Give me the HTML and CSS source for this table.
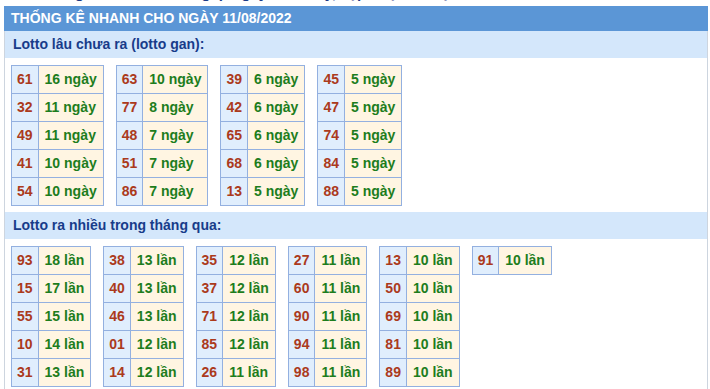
FILE: index.html
```html
<!DOCTYPE html>
<html lang="vi">

<head>
    <meta charset="utf-8">
    <title>Thống kê nhanh</title>
    <link rel="stylesheet" href="styles.css">
</head>

<body>
    <!-- page heading (mostly scrolled above) -->
    <div class="page-title">
        <p>Thống kê nhanh xổ số gấp ngày hôm nay, cập nhật liên tục</p>
    </div>

    <div class="stat-box">
        <div class="stat-box__title">THỐNG KÊ NHANH CHO NGÀY 11/08/2022</div>

        <!-- lotto gan -->
        <div class="stat-box__section">Lotto lâu chưa ra (lotto gan):</div>
        <div class="stat-box__tables">
            <table class="lotto">
                <tr><td class="num">61</td><td class="count">16 ngày</td></tr>
                <tr><td class="num">32</td><td class="count">11 ngày</td></tr>
                <tr><td class="num">49</td><td class="count">11 ngày</td></tr>
                <tr><td class="num">41</td><td class="count">10 ngày</td></tr>
                <tr><td class="num">54</td><td class="count">10 ngày</td></tr>
            </table>
            <table class="lotto">
                <tr><td class="num">63</td><td class="count">10 ngày</td></tr>
                <tr><td class="num">77</td><td class="count">8 ngày</td></tr>
                <tr><td class="num">48</td><td class="count">7 ngày</td></tr>
                <tr><td class="num">51</td><td class="count">7 ngày</td></tr>
                <tr><td class="num">86</td><td class="count">7 ngày</td></tr>
            </table>
            <table class="lotto">
                <tr><td class="num">39</td><td class="count">6 ngày</td></tr>
                <tr><td class="num">42</td><td class="count">6 ngày</td></tr>
                <tr><td class="num">65</td><td class="count">6 ngày</td></tr>
                <tr><td class="num">68</td><td class="count">6 ngày</td></tr>
                <tr><td class="num">13</td><td class="count">5 ngày</td></tr>
            </table>
            <table class="lotto">
                <tr><td class="num">45</td><td class="count">5 ngày</td></tr>
                <tr><td class="num">47</td><td class="count">5 ngày</td></tr>
                <tr><td class="num">74</td><td class="count">5 ngày</td></tr>
                <tr><td class="num">84</td><td class="count">5 ngày</td></tr>
                <tr><td class="num">88</td><td class="count">5 ngày</td></tr>
            </table>
        </div>

        <!-- lotto ra nhieu -->
        <div class="stat-box__section">Lotto ra nhiều trong tháng qua:</div>
        <div class="stat-box__tables">
            <table class="lotto">
                <tr><td class="num">93</td><td class="count">18 lần</td></tr>
                <tr><td class="num">15</td><td class="count">17 lần</td></tr>
                <tr><td class="num">55</td><td class="count">15 lần</td></tr>
                <tr><td class="num">10</td><td class="count">14 lần</td></tr>
                <tr><td class="num">31</td><td class="count">13 lần</td></tr>
            </table>
            <table class="lotto">
                <tr><td class="num">38</td><td class="count">13 lần</td></tr>
                <tr><td class="num">40</td><td class="count">13 lần</td></tr>
                <tr><td class="num">46</td><td class="count">13 lần</td></tr>
                <tr><td class="num">01</td><td class="count">12 lần</td></tr>
                <tr><td class="num">14</td><td class="count">12 lần</td></tr>
            </table>
            <table class="lotto">
                <tr><td class="num">35</td><td class="count">12 lần</td></tr>
                <tr><td class="num">37</td><td class="count">12 lần</td></tr>
                <tr><td class="num">71</td><td class="count">12 lần</td></tr>
                <tr><td class="num">85</td><td class="count">12 lần</td></tr>
                <tr><td class="num">26</td><td class="count">11 lần</td></tr>
            </table>
            <table class="lotto">
                <tr><td class="num">27</td><td class="count">11 lần</td></tr>
                <tr><td class="num">60</td><td class="count">11 lần</td></tr>
                <tr><td class="num">90</td><td class="count">11 lần</td></tr>
                <tr><td class="num">94</td><td class="count">11 lần</td></tr>
                <tr><td class="num">98</td><td class="count">11 lần</td></tr>
            </table>
            <table class="lotto">
                <tr><td class="num">13</td><td class="count">10 lần</td></tr>
                <tr><td class="num">50</td><td class="count">10 lần</td></tr>
                <tr><td class="num">69</td><td class="count">10 lần</td></tr>
                <tr><td class="num">81</td><td class="count">10 lần</td></tr>
                <tr><td class="num">89</td><td class="count">10 lần</td></tr>
            </table>
            <table class="lotto">
                <tr><td class="num">91</td><td class="count">10 lần</td></tr>
            </table>
        </div>
    </div>
</body>

</html>
```

FILE: styles.css
```css
/* ============ */
/* Page         */
/* ============ */
* {
    box-sizing: border-box;
}
body {
    margin: 0;
    font: normal 14px 'Liberation Sans', Arial, sans-serif;
    background-color: #ffffff;
}

.page-title {
    height: 6px;
    overflow: hidden;
    padding-left: 38px;
}
.page-title p {
    margin: -16px 0 0;
    line-height: 17px;
    font-weight: bold;
    font-size: 15px;
    color: #1d3b86;
}

/* ============ */
/* Stat box     */
/* ============ */
.stat-box {
    margin: 0 2px 0 4px;
    border-left: solid 1px #cdd5df;
    border-right: solid 1px #cdd5df;
}

.stat-box__title {
    height: 25px;
    margin: 0 -1px;
    padding: 0 7px;
    line-height: 25px;
    background-color: #5b96d6;
    color: #ffffff;
    font-weight: bold;
    font-size: 14px;
}

.stat-box__section {
    height: 27px;
    padding: 0 8px;
    line-height: 27px;
    background-color: #d4e7fb;
    color: #183c8a;
    font-weight: bold;
    font-size: 14px;
}

.stat-box__tables {
    display: flex;
    flex-wrap: wrap;
    align-items: flex-start;
    gap: 12px;
    padding: 7px 6px 6px;
}

/* ============ */
/* Lotto tables */
/* ============ */
.lotto {
    border-collapse: collapse;
}
.lotto td {
    border: solid 1px #93b0e0;
    padding: 5px 6px;
    line-height: 17px;
    font-weight: bold;
    font-size: 14px;
    white-space: nowrap;
}
.lotto .num {
    padding: 5px 5px;
    background-color: #e0eefd;
    color: #ab3a1c;
}
.lotto .count {
    background-color: #fff5e2;
    color: #1d7d1d;
}
```
